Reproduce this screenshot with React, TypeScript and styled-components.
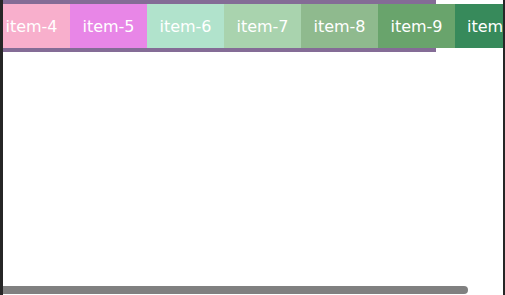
import React from "react";
import styled, { createGlobalStyle } from "styled-components";

const Global = createGlobalStyle`
  html, body { margin: 0; padding: 0; background: #ffffff; }
  body { font-family: "DejaVu Sans", Verdana, sans-serif; }
`;

const Frame = styled.div`
  display: flex;
  width: 505px;
  height: 295px;
`;

const Edge = styled.div<{ $w: number }>`
  width: ${(p) => p.$w}px;
  flex: none;
  background: #262626;
`;

const Viewport = styled.div`
  flex: 1;
  min-width: 0;
  display: flex;
  flex-direction: column;
  overflow: hidden;
  background: #ffffff;
`;

const Bar = styled.div`
  width: 433px;
  flex: none;
  padding: 4px 0;
  background: #846c96;
`;

const Row = styled.div`
  display: flex;
  margin-left: -10px;
  width: max-content;
`;

const Item = styled.div<{ $bg: string }>`
  height: 44px;
  min-width: 77px;
  box-sizing: border-box;
  padding: 0 12px;
  flex: none;
  display: flex;
  align-items: center;
  justify-content: center;
  background: ${(p) => p.$bg};
  color: #ffffff;
  font-size: 16px;
  font-family: "DejaVu Sans", Verdana, sans-serif;
  white-space: nowrap;
`;

const Spacer = styled.div`
  flex: 1;
`;

const Track = styled.div`
  height: 8px;
  flex: none;
  margin-bottom: 1px;
`;

const Thumb = styled.div`
  width: 465px;
  height: 100%;
  background: #808080;
  border-radius: 0 4px 4px 0;
`;

const items = [
  { label: "item-4", bg: "#f8afcc" },
  { label: "item-5", bg: "#e886e7" },
  { label: "item-6", bg: "#b1e3cc" },
  { label: "item-7", bg: "#a9d3ae" },
  { label: "item-8", bg: "#8fba8e" },
  { label: "item-9", bg: "#69a46c" },
  { label: "item-10", bg: "#378a5b" },
];

export default function App() {
  return (
    <>
      <Global />
      <Frame>
        <Edge $w={3} />
        <Viewport>
          <Bar>
            <Row>
              {items.map((it) => (
                <Item key={it.label} $bg={it.bg}>
                  {it.label}
                </Item>
              ))}
            </Row>
          </Bar>
          <Spacer />
          <Track>
            <Thumb />
          </Track>
        </Viewport>
        <Edge $w={2} />
      </Frame>
    </>
  );
}
